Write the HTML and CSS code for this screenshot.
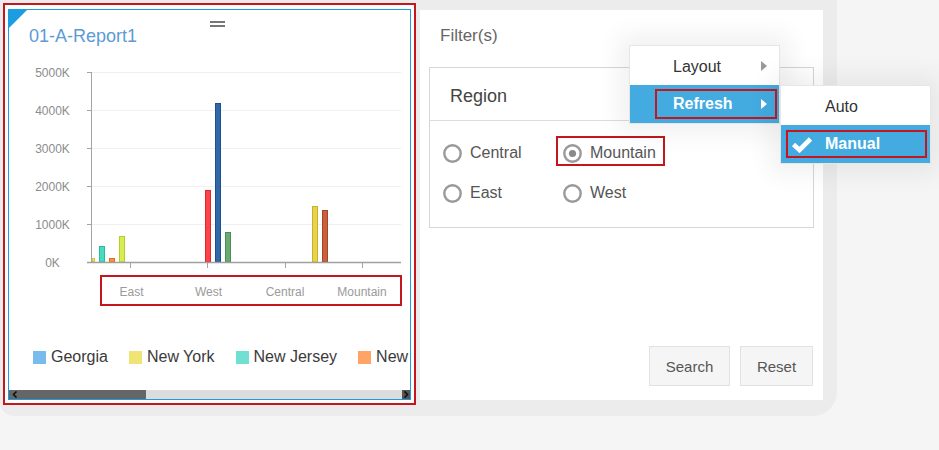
FILE: index.html
```html
<!DOCTYPE html>
<html>
<head>
<meta charset="utf-8">
<title>Report</title>
<link rel="stylesheet" href="styles.css">
</head>
<body>
<div class="stage">
  <div class="sel">
    <div class="card">
      <div class="card-head">
        <span class="corner"></span>
        <span class="handle"></span>
        <h1 class="title">01-A-Report1</h1>
      </div>
      <svg class="chart" viewBox="9 60 401 255" width="401" height="255">
        <g stroke="#f0f0f0" stroke-width="1">
          <line x1="92" y1="72.5" x2="401" y2="72.5"/>
          <line x1="92" y1="110.5" x2="401" y2="110.5"/>
          <line x1="92" y1="148.5" x2="401" y2="148.5"/>
          <line x1="92" y1="186.5" x2="401" y2="186.5"/>
          <line x1="92" y1="224.5" x2="401" y2="224.5"/>
        </g>
        <g stroke="#a3a3a3" stroke-width="1">
          <line x1="91.5" y1="72" x2="91.5" y2="263"/>
          <line x1="87" y1="72.5" x2="92" y2="72.5"/>
          <line x1="87" y1="110.5" x2="92" y2="110.5"/>
          <line x1="87" y1="148.5" x2="92" y2="148.5"/>
          <line x1="87" y1="186.5" x2="92" y2="186.5"/>
          <line x1="87" y1="224.5" x2="92" y2="224.5"/>
          <line x1="130.5" y1="262" x2="130.5" y2="268"/>
          <line x1="207.5" y1="262" x2="207.5" y2="268"/>
          <line x1="285.5" y1="262" x2="285.5" y2="268"/>
          <line x1="362.5" y1="262" x2="362.5" y2="268"/>
        </g>
        <g stroke-width="1">
          <rect x="92.5" y="258.5" width="2" height="3.5" fill="#f3e25a" stroke="#d8c53a"/>
          <rect x="99.5" y="246.5" width="5" height="15.5" fill="#45dcc0" stroke="#2fb89c"/>
          <rect x="109.5" y="258.5" width="5" height="3.5" fill="#ff9040" stroke="#e07020"/>
          <rect x="119.5" y="236.5" width="5" height="25.5" fill="#d7ee50" stroke="#b5cc30"/>
          <rect x="205.5" y="190.5" width="5" height="71.5" fill="#ff4245" stroke="#d82a2e"/>
          <rect x="215.5" y="103.5" width="5" height="158.5" fill="#3169a8" stroke="#1f4f88"/>
          <rect x="225.5" y="232.5" width="5" height="29.5" fill="#6aab72" stroke="#4c8c55"/>
          <rect x="312.5" y="206.5" width="5" height="55.5" fill="#e9d34a" stroke="#c9b22a"/>
          <rect x="322.5" y="210.5" width="5" height="51.5" fill="#c8613e" stroke="#a34526"/>
        </g>
        <line x1="87" y1="262.5" x2="401" y2="262.5" stroke="#a0a0a0" stroke-width="1.5"/>
        <g class="chart-text" text-anchor="middle">
          <text x="52.5" y="76.8">5000K</text>
          <text x="52.5" y="114.8">4000K</text>
          <text x="52.5" y="152.8">3000K</text>
          <text x="52.5" y="190.8">2000K</text>
          <text x="52.5" y="228.8">1000K</text>
          <text x="52.5" y="266.8">0K</text>
        </g>
        <g class="chart-text axis-x" text-anchor="middle">
          <text x="131.5" y="296">East</text>
          <text x="208.5" y="296">West</text>
          <text x="285" y="296">Central</text>
          <text x="362" y="296">Mountain</text>
        </g>
        <rect x="101" y="276" width="300" height="29" fill="none" stroke="#c4161c" stroke-width="2"/>
      </svg>
      <div class="legend">
        <div class="lg-item"><span class="lg-swatch sw-georgia"></span>Georgia</div>
        <div class="lg-item"><span class="lg-swatch sw-newyork"></span>New York</div>
        <div class="lg-item"><span class="lg-swatch sw-newjersey"></span>New Jersey</div>
        <div class="lg-item"><span class="lg-swatch sw-new"></span>New</div>
      </div>
      <div class="hscroll">
        <div class="thumb">
          <svg width="6" height="7" viewBox="0 0 6 7"><path d="M4.5 0.5 L1.5 3.5 L4.5 6.5" fill="none" stroke="#111" stroke-width="1.6"/></svg>
        </div>
        <div class="track"></div>
        <div class="arrow-r">
          <svg width="6" height="7" viewBox="0 0 6 7"><path d="M1.5 0.5 L4.5 3.5 L1.5 6.5" fill="none" stroke="#111" stroke-width="1.6"/></svg>
        </div>
      </div>
    </div>
  </div>

  <div class="panel">
    <div class="filters-title">Filter(s)</div>
    <div class="region">
      <div class="region-head">Region</div>
      <div class="region-body">
        <div class="opt">
          <svg class="radio" viewBox="0 0 19 19"><circle cx="9.5" cy="9.5" r="8.2" fill="#fff" stroke="#999" stroke-width="2.4"/></svg>
          <span>Central</span>
        </div>
        <div class="opt marked">
          <svg class="radio" viewBox="0 0 19 19"><circle cx="9.5" cy="9.5" r="8.2" fill="#fff" stroke="#999" stroke-width="2.4"/><circle cx="9.5" cy="9.5" r="3.6" fill="#8a8a8a"/></svg>
          <span>Mountain</span>
        </div>
        <div class="opt">
          <svg class="radio" viewBox="0 0 19 19"><circle cx="9.5" cy="9.5" r="8.2" fill="#fff" stroke="#999" stroke-width="2.4"/></svg>
          <span>East</span>
        </div>
        <div class="opt">
          <svg class="radio" viewBox="0 0 19 19"><circle cx="9.5" cy="9.5" r="8.2" fill="#fff" stroke="#999" stroke-width="2.4"/></svg>
          <span>West</span>
        </div>
      </div>
    </div>
    <div class="actions">
      <button class="btn btn-search">Search</button>
      <button class="btn btn-reset">Reset</button>
    </div>
  </div>
</div>

<div class="menu main-menu">
  <div class="mi mi-first">
    <div class="mi-box"><span>Layout</span><span class="caret"></span></div>
  </div>
  <div class="mi mi-second active">
    <div class="mi-box marked"><span>Refresh</span><span class="caret"></span></div>
  </div>
</div>

<div class="menu sub-menu">
  <div class="mi mi-first">
    <div class="mi-box"><span class="check-slot"></span><span>Auto</span></div>
  </div>
  <div class="mi mi-second active">
    <div class="mi-box marked">
      <svg class="check-slot" width="22" height="17" viewBox="0 0 22 17"><path d="M2.5 8.5 L8.5 14 L19.5 3" fill="none" stroke="#fff" stroke-width="4.6"/></svg>
      <span>Manual</span>
    </div>
  </div>
</div>
</body>
</html>
```

FILE: styles.css
```css
* { box-sizing: border-box; }

html, body {
  margin: 0;
  padding: 0;
}

body {
  width: 939px;
  height: 450px;
  overflow: hidden;
  position: relative;
  background: #f5f5f5;
  font-family: "Liberation Sans", Arial, Helvetica, sans-serif;
}

.stage {
  display: flex;
  align-items: flex-start;
  width: 837px;
  height: 416px;
  background: #ececec;
  border-radius: 0 0 24px 14px;
}

/* left report card with selection outline */
.sel {
  margin: 3px 0 0 3px;
  width: 413px;
  height: 402px;
  border: 2px solid #c4161c;
  background: #fff;
  padding: 4px 3px 3px 3px;
  flex: none;
}

.card {
  height: 100%;
  border: 1px solid #1c9de2;
  display: flex;
  flex-direction: column;
  overflow: hidden;
  position: relative;
}

.card-head {
  position: relative;
  height: 50px;
  padding: 15px 0 0 20px;
  flex: none;
}

.corner {
  position: absolute;
  left: 0;
  top: 0;
  width: 0;
  height: 0;
  border-top: 18px solid #1c9de2;
  border-right: 18px solid transparent;
}

.handle {
  position: absolute;
  left: 201px;
  top: 11px;
  width: 15px;
  height: 6px;
  border-top: 2px solid #777;
  border-bottom: 2px solid #777;
}

.title {
  margin: 0;
  font-size: 18px;
  line-height: 22px;
  font-weight: normal;
  color: #5b9bd5;
}

.chart {
  display: block;
  flex: none;
}

.chart-text {
  font-family: "Liberation Sans", Arial, sans-serif;
  font-size: 12px;
  fill: #8c8c8c;
}

.axis-x {
  fill: #9a9a9a;
}

.legend {
  display: flex;
  flex: none;
  height: 16px;
  margin-top: 34px;
  padding-left: 24px;
  white-space: nowrap;
}

.lg-item {
  display: flex;
  align-items: center;
  flex: none;
  margin-right: 21px;
  font-size: 16px;
  line-height: 16px;
  color: #3a3a3a;
}

.lg-swatch {
  width: 13px;
  height: 13px;
  margin-right: 5px;
}

.sw-georgia { background: #78bcee; }
.sw-newyork { background: #f0e474; }
.sw-newjersey { background: #6fe0d2; }
.sw-new { background: #ffa465; }

.hscroll {
  margin-top: auto;
  height: 9px;
  display: flex;
  flex: none;
  background: #dcdcdc;
}

.thumb {
  width: 137px;
  background: #666;
  display: flex;
  align-items: center;
  padding-left: 3px;
}

.thumb svg, .arrow-r svg { display: block; }

.track { flex: 1; }

.arrow-r {
  width: 8px;
  background: #555;
  display: flex;
  align-items: center;
  justify-content: center;
}

/* right filter panel */
.panel {
  margin: 10px 0 0 4px;
  width: 403px;
  height: 390px;
  background: #fff;
  display: flex;
  flex-direction: column;
  padding: 16px 9px 0 9px;
  flex: none;
}

.filters-title {
  font-size: 17px;
  line-height: 20px;
  color: #666;
  padding-left: 11px;
  margin-bottom: 21px;
}

.region {
  border: 1px solid #d6d6d6;
  height: 161px;
}

.region-head {
  height: 53px;
  border-bottom: 1px solid #dcdcdc;
  padding: 17px 0 0 20px;
  font-size: 18px;
  line-height: 22px;
  color: #444;
}

.region-body {
  display: grid;
  grid-template-columns: 120px 120px;
  row-gap: 10px;
  padding: 15px 0 0 6px;
  justify-items: start;
}

.opt {
  display: flex;
  align-items: center;
  height: 30px;
  border: 2px solid transparent;
  padding: 4px 7px 0 5px;
  font-size: 16px;
  line-height: 18px;
  color: #555;
}

.opt.marked { border-color: #c4161c; }

.radio {
  width: 19px;
  height: 19px;
  margin-right: 8px;
  flex: none;
  display: block;
}

.actions {
  margin-top: auto;
  margin-bottom: 14px;
  margin-right: 1px;
  align-self: flex-end;
  display: flex;
  gap: 10px;
}

.btn {
  height: 40px;
  padding: 0;
  background: #f5f5f5;
  border: 1px solid #e2e2e2;
  font-family: "Liberation Sans", Arial, sans-serif;
  font-size: 15px;
  color: #555;
}

.btn-search { width: 81px; }
.btn-reset { width: 73px; }

/* context menus */
.menu {
  position: absolute;
  width: 151px;
  background: #fff;
  border: 1px solid #e6e6e6;
  box-shadow: 0 0 24px 10px rgba(0, 0, 0, 0.06);
  font-size: 16px;
  color: #333;
}

.main-menu { left: 629px; top: 45px; }
.sub-menu { left: 780px; top: 85px; }

.mi { display: flex; }
.mi-first { height: 39px; }
.mi-second { height: 38px; }

.mi.active {
  background: #43abe0;
  color: #fff;
  font-weight: bold;
}

.mi-box {
  flex: 1;
  display: flex;
  align-items: center;
  border: 2px solid transparent;
}

.mi-first .mi-box { padding-top: 3px; }

.mi-box.marked { border-color: #c4161c; }

.main-menu .mi-box {
  margin: 4px 2px 4px 25px;
  padding-left: 16px;
  padding-right: 8px;
}

.sub-menu .mi-box {
  margin: 5px 3px 5px 5px;
  padding-left: 3px;
}

.check-slot {
  display: block;
  width: 22px;
  height: 17px;
  margin-right: 12px;
  flex: none;
}

.caret {
  margin-left: auto;
  width: 0;
  height: 0;
  border-left: 6px solid #999;
  border-top: 5px solid transparent;
  border-bottom: 5px solid transparent;
}

.mi-first .caret { margin-top: -3px; }

.active .caret { border-left-color: #fff; }
```
